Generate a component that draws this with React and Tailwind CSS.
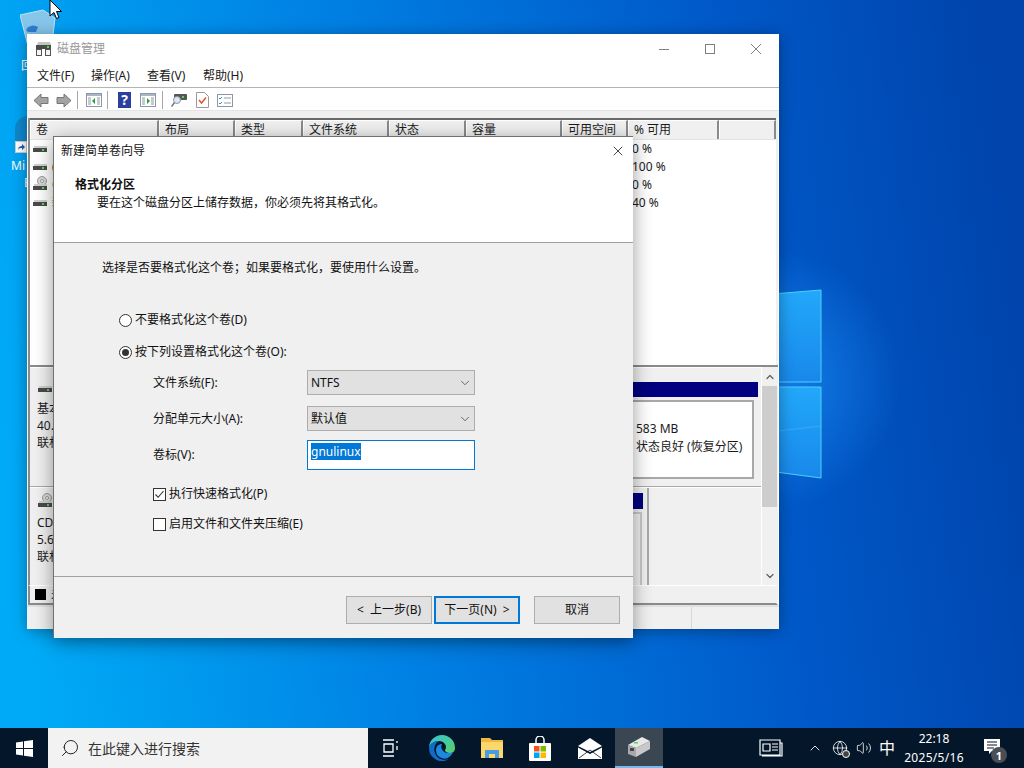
import { ChevronDown, ChevronUp, Globe, Search, Volume2, X } from "lucide-react";

const columns = [
  { label: "卷", w: "w-[129px]" },
  { label: "布局", w: "w-[76px]" },
  { label: "类型", w: "w-[68px]" },
  { label: "文件系统", w: "w-[86px]" },
  { label: "状态", w: "w-[77px]" },
  { label: "容量", w: "w-[96px]" },
  { label: "可用空间", w: "w-[66px]" },
  { label: "% 可用", w: "w-[91px]" },
  { label: "", w: "flex-1" },
];

const rows = [
  { name: "", free: "0 %", cd: false },
  { name: "(", free: "100 %", cd: false },
  { name: "C", free: "0 %", cd: true },
  { name: "新", free: "40 %", cd: false },
];

function DriveIcon({ cd }) {
  return (
    <svg width="18" height="16" viewBox="0 0 18 16" className="block">
      {cd && <circle cx="10" cy="5" r="4.5" fill="#d8d8d8" stroke="#999" />}
      {cd && <circle cx="10" cy="5" r="1.5" fill="#fff" stroke="#999" />}
      <rect x="2" y="8" width="13" height="2" fill="#cfcfcf" />
      <rect x="1" y="10" width="14" height="4" fill="#4a4a4a" />
      <rect x="10" y="11" width="2" height="2" fill="#4fdc4f" />
    </svg>
  );
}

function TitleIcon() {
  return (
    <svg width="16" height="14" viewBox="0 0 16 14" className="block">
      <path d="M3 0H15L16 3H2Z" fill="#c4c4c4" />
      <rect x="1" y="3" width="15" height="4" fill="#4a4a4a" />
      <rect x="12" y="4" width="2" height="2" fill="#4fdc4f" />
      <path d="M1 7H7V14H1ZM10 7H16V14H10Z" fill="#555" />
      <path d="M2 8H6V13H2ZM11 8H15V13H11Z" fill="#f4f4f4" />
    </svg>
  );
}

function NavArrow({ flip }) {
  return (
    <svg width="16" height="15" viewBox="0 0 16 15" className={flip ? "-scale-x-100" : ""}>
      <path d="M1 7.5 8 1v3.5h7v6H8V14Z" fill="#a3a3a3" stroke="#777" />
    </svg>
  );
}

function ToolSep() {
  return <div className="mx-[5px] h-[18px] w-px bg-[#a8a8a8]" />;
}

function PanelIcon({ right }) {
  return (
    <svg width="16" height="14" viewBox="0 0 16 14">
      <rect x="0.5" y="0.5" width="15" height="13" fill="#fff" stroke="#8a98a8" />
      <rect x="1" y="1" width="14" height="2" fill="#aab6c4" />
      <path d="M2 5h3M2 7h3M2 9h3M2 11h3M11 5h3M11 7h3M11 9h3M11 11h3" stroke="#8a98a8" />
      <path d={right ? "M7 5v6l3-3Z" : "M9 5v6L6 8Z"} fill="#2c9c3c" />
    </svg>
  );
}

function HelpIcon() {
  return (
    <div className="flex h-[16px] w-[13px] items-center justify-center bg-[#2b3f9e] text-[14px] font-bold leading-none text-white">
      ?
    </div>
  );
}

function KeyIcon() {
  return (
    <svg width="16" height="16" viewBox="0 0 16 16">
      <rect x="3" y="2" width="13" height="6" rx="1" fill="#555" />
      <rect x="11" y="4" width="2" height="2" fill="#4fdc4f" />
      <circle cx="6" cy="8" r="3.5" fill="#dfe8f0" stroke="#8a98a8" />
      <path d="M3.5 10.5 0.5 14.5" stroke="#777" strokeWidth="1.5" />
    </svg>
  );
}

function CheckDocIcon() {
  return (
    <svg width="13" height="16" viewBox="0 0 13 16">
      <path d="M0.5 0.5h8l4 4v11h-12Z" fill="#fff" stroke="#9a9a9a" />
      <path d="M3 8l2.5 3L10 5.5" fill="none" stroke="#e0562a" strokeWidth="1.5" />
    </svg>
  );
}

function ChecklistIcon() {
  return (
    <svg width="16" height="13" viewBox="0 0 16 13">
      <rect x="0.5" y="0.5" width="15" height="12" fill="#fff" stroke="#8a98a8" />
      <path d="M2 4l1 1 2-2M2 9l1 1 2-2" fill="none" stroke="#3a86d0" />
      <path d="M7 4h7M7 9h7" stroke="#8a98a8" />
    </svg>
  );
}

function ComboBox({ value }) {
  return (
    <div className="flex h-[25px] w-[168px] items-center justify-between border border-[#adadad] bg-[#e1e1e1] pl-[3px] pr-[2px]">
      <span>{value}</span>
      <ChevronDown size={14} strokeWidth={1.2} className="text-[#333]" />
    </div>
  );
}

function Radio({ on }) {
  return (
    <div className="flex h-[13px] w-[13px] items-center justify-center rounded-full border border-[#333] bg-white">
      {on && <div className="h-[7px] w-[7px] rounded-full bg-[#333]" />}
    </div>
  );
}

function Check({ on }) {
  return (
    <div className="flex h-[13px] w-[13px] items-center justify-center border border-[#333] bg-white">
      {on && (
        <svg width="11" height="11" viewBox="0 0 11 11">
          <path d="M1.5 5.500 4.200 8.300 9.500 2" fill="none" stroke="#333" strokeWidth="1.1" />
        </svg>
      )}
    </div>
  );
}

function WizardButton({ children, active }) {
  return (
    <div
      className={
        active
          ? "flex h-[28px] w-[86px] items-center justify-center whitespace-pre border-2 border-[#0078d7] bg-[#e1e1e1]"
          : "flex h-[28px] w-[86px] items-center justify-center whitespace-pre border border-[#adadad] bg-[#e1e1e1]"
      }
    >
      {children}
    </div>
  );
}

function Wallpaper() {
  return (
    <svg className="absolute inset-0" width="1024" height="768" viewBox="0 0 1024 768">
      <defs>
        <linearGradient id="base" x1="0" y1="0.55" x2="1" y2="0.45">
          <stop offset="0" stopColor="#00aaf6" />
          <stop offset="0.35" stopColor="#0082e4" />
          <stop offset="0.75" stopColor="#0058c8" />
          <stop offset="1" stopColor="#0044ac" />
        </linearGradient>
        <radialGradient id="glow" cx="770" cy="380" r="130" gradientUnits="userSpaceOnUse">
          <stop offset="0" stopColor="#1a8cf5" stopOpacity="0.8" />
          <stop offset="1" stopColor="#1a8cf5" stopOpacity="0" />
        </radialGradient>
        <linearGradient id="pane" x1="0" y1="0" x2="0" y2="1">
          <stop offset="0" stopColor="#22a8fa" />
          <stop offset="1" stopColor="#1888ea" />
        </linearGradient>
      </defs>
      <rect width="1024" height="768" fill="url(#base)" />
      <rect width="1024" height="768" fill="url(#glow)" />
      <path d="M700 300 821 290V382H700Z" fill="url(#pane)" stroke="#4fd0f8" />
      <path d="M700 387H821V478L700 462Z" fill="url(#pane)" stroke="#4fd0f8" />
      <path d="M700 440 821 426" stroke="#5cc0f8" strokeOpacity="0.4" />
    </svg>
  );
}

function DesktopIcons() {
  return (
    <>
      <div className="absolute left-[20px] top-[8px]">
        <svg width="38" height="42" viewBox="0 0 38 42">
          <path d="M0 7 23 2 35 10 32 36 8 38Z" fill="#86c6ea" stroke="#bfe2f4" />
          <path d="M6 22a8 8 0 0 1 12-3l-2 5H8Z" fill="#2f80d0" />
        </svg>
      </div>
      <span className="absolute left-[21px] top-[57px] text-[12px] leading-[18px] text-white">回</span>
      <div className="absolute left-[15px] top-[116px] h-[36px] w-[13px] rounded-l-full bg-[#0f86cc]" />
      <div className="absolute left-[15px] top-[141px] flex h-[12px] w-[12px] items-center justify-center border border-[#ccc] bg-white">
        <svg width="8" height="8" viewBox="0 0 8 8">
          <path d="M1 7C1 4 3 3 5 3V1L8 4 5 7V5C3 5 2 5 1 7Z" fill="#1a5fb4" />
        </svg>
      </div>
      <span className="absolute left-[11px] top-[157px] text-[12px] leading-[18px] text-white">Mi</span>
      <span className="absolute left-[24px] top-[174px] text-[12px] leading-[18px] text-white">E</span>
      <svg className="absolute left-[49px] top-0" width="13" height="20" viewBox="0 0 13 20">
        <path d="M1 0V16L5 12.500 7.500 18.500 10 17.500 7.500 11.500H12.500Z" fill="#fff" stroke="#000" />
      </svg>
    </>
  );
}

function DiskManagementWindow() {
  return (
    <div className="absolute left-[27px] top-[34px] flex h-[595px] w-[752px] flex-col bg-white shadow-[0_2px_14px_rgba(0,0,0,0.35)]">
      {/* Title bar */}
      <div className="flex h-[30px] shrink-0 items-center">
        <div className="ml-[8px] mr-[6px]">
          <TitleIcon />
        </div>
        <span className="text-[#999]">磁盘管理</span>
        <div className="ml-auto flex items-center">
          <div className="flex w-[46px] justify-center">
            <div className="h-px w-[10px] bg-[#808080]" />
          </div>
          <div className="flex w-[46px] justify-center">
            <div className="h-[10px] w-[10px] border border-[#808080]" />
          </div>
          <div className="flex w-[46px] justify-center">
            <svg width="10" height="10" viewBox="0 0 10 10">
              <path d="M0 0 10 10M10 0 0 10" stroke="#808080" />
            </svg>
          </div>
        </div>
      </div>

      {/* Menu */}
      <div className="flex h-[24px] shrink-0 items-center border-b border-[#b4b4b4] pl-[10px]">
        <span className="w-[54px]">文件(F)</span>
        <span className="w-[56px]">操作(A)</span>
        <span className="w-[56px]">查看(V)</span>
        <span>帮助(H)</span>
      </div>

      {/* Toolbar */}
      <div className="flex h-[22px] shrink-0 items-center pl-[6px] pt-[2px]">
        <NavArrow />
        <div className="w-[7px]" />
        <NavArrow flip />
        <ToolSep />
        <div className="ml-[3px]">
          <PanelIcon />
        </div>
        <ToolSep />
        <div className="ml-[5px] mr-[9px]">
          <HelpIcon />
        </div>
        <PanelIcon right />
        <div className="w-px" />
        <ToolSep />
        <div className="ml-[3px] mr-[9px]">
          <KeyIcon />
        </div>
        <div className="mr-[8px]">
          <CheckDocIcon />
        </div>
        <ChecklistIcon />
      </div>
      <div className="h-[8px] shrink-0 border-t border-[#e4e4e4] bg-[#f0f0f0]" />

      {/* Volume list */}
      <div className="mx-[1px] flex h-[247px] shrink-0 flex-col border-x-2 border-[#8a8a8a] border-r-[#f0f0f0]">
        <div className="flex h-[21px] shrink-0 border-t-2 border-[#6a6a6a] bg-[#f0f0f0]">
          {columns.map((col) => (
            <div
              key={col.label}
              className={`${col.w} flex items-center border-l border-t border-l-white border-t-white border-r-2 border-r-[#8a8a8a] pb-[1px] pl-[5px]`}
            >
              {col.label}
            </div>
          ))}
        </div>
        <div className="flex-1 border-t border-[#e4e4e4]">
          {rows.map((row) => (
            <div key={row.free} className="flex h-[18px] items-center">
              <div className="flex w-[602px] items-center pl-[2px]">
                <div className={row.cd ? "-translate-y-[1px]" : "-translate-y-[3px]"}>
                  <DriveIcon cd={row.cd} />
                </div>
                <span className="ml-[2px]">{row.name}</span>
              </div>
              <span>{row.free}</span>
            </div>
          ))}
        </div>
      </div>

      {/* Disk map */}
      <div className="mx-[1px] flex h-[220px] shrink-0 border-l-2 border-t-2 border-[#8a8a8a] bg-[#f0f0f0]">
        <div className="flex min-w-0 flex-1 flex-col">
          <div className="flex h-[120px] shrink-0 border-b border-[#a8a8a8] border-t border-t-white">
            <div className="w-[100px] shrink-0 pl-[7px] pt-[10px]">
              <DriveIcon />
              <div className="mt-[6px] leading-[17px]">
                <div>基本</div>
                <div>40.00 GB</div>
                <div>联机</div>
              </div>
            </div>
            <div className="ml-auto mr-[3px] mt-[14px] w-[130px] shrink-0">
              <div className="h-[15px] bg-[#000080]" />
              <div className="mr-[4px] mt-[3px] h-[79px] border-2 border-[#a8a8a8] bg-white pl-[6px] pt-[18px] leading-[18px]">
                <div>583 MB</div>
                <div className="whitespace-nowrap">状态良好 (恢复分区)</div>
              </div>
            </div>
          </div>
          <div className="flex flex-1 border-t border-t-white">
            <div className="w-[100px] shrink-0 pl-[7px] pt-[5px]">
              <DriveIcon cd />
              <div className="mt-[5px] leading-[17px]">
                <div>CD-ROM</div>
                <div>5.66 GB</div>
                <div>联机</div>
              </div>
            </div>
            <div className="ml-[490px] mr-[4px] mt-[5px] flex w-[23px] shrink-0 flex-col">
              <div className="h-[16px] shrink-0 bg-[#000080]" />
              <div className="mr-[1px] mt-[3px] flex-1 border-r-2 border-t-2 border-[#c8c8c8]" />
            </div>
            <div className="w-[2px] shrink-0 bg-[#a8a8a8]" />
          </div>
        </div>
        {/* Scrollbar */}
        <div className="mr-[1px] flex w-[16px] shrink-0 flex-col items-center border-l border-white">
          <div className="flex h-[19px] items-center">
            <ChevronUp size={12} strokeWidth={2.5} className="text-[#606060]" />
          </div>
          <div className="h-[121px] w-full bg-[#cdcdcd]" />
          <div className="mt-auto flex h-[19px] items-center">
            <ChevronDown size={12} strokeWidth={2.5} className="text-[#606060]" />
          </div>
        </div>
      </div>

      {/* Legend */}
      <div className="mx-[1px] flex h-[20px] shrink-0 items-center border-x-2 border-b-2 border-t border-[#8a8a8a] border-t-white border-r-[#f0f0f0] bg-[#f0f0f0] pl-[5px]">
        <div className="h-[11px] w-[11px] bg-black" />
        <span className="ml-[5px]">未分配</span>
      </div>

      {/* Status bar */}
      <div className="flex flex-1 border-t-2 border-[#e0e0e0] bg-[#f0f0f0]">
        <div className="w-[665px] border-r border-[#d8d8d8]" />
      </div>
    </div>
  );
}

function WizardDialog() {
  return (
    <div className="absolute left-[53px] top-[136px] flex h-[502px] w-[580px] flex-col border-l border-t border-[#707070] bg-[#f0f0f0] text-[#111] shadow-[0_4px_18px_rgba(0,0,0,0.4)]">
      <div className="h-[106px] shrink-0 border-b border-[#a0a0a0] bg-white">
        <div className="flex h-[28px] items-center justify-between pl-[7px] pr-[7px]">
          <span>新建简单卷向导</span>
          <X size={16} strokeWidth={1.1} className="text-black" />
        </div>
        <div className="ml-[21px] mt-[11px] font-bold leading-[18px]">格式化分区</div>
        <div className="ml-[43px] leading-[18px]">要在这个磁盘分区上储存数据，你必须先将其格式化。</div>
      </div>

      <div className="flex-1 pl-[48px] pt-[16px]">
        <div className="leading-[18px]">选择是否要格式化这个卷；如果要格式化，要使用什么设置。</div>

        <div className="ml-[17px] mt-[34px] flex h-[18px] items-center gap-[3px]">
          <Radio />
          <span>不要格式化这个卷(D)</span>
        </div>
        <div className="ml-[17px] mt-[14px] flex h-[18px] items-center gap-[3px]">
          <Radio on />
          <span>按下列设置格式化这个卷(O):</span>
        </div>

        <div className="ml-[51px] mt-[9px] flex h-[25px] items-center">
          <span className="w-[154px]">文件系统(F):</span>
          <ComboBox value="NTFS" />
        </div>
        <div className="ml-[51px] mt-[11px] flex h-[25px] items-center">
          <span className="w-[154px]">分配单元大小(A):</span>
          <ComboBox value="默认值" />
        </div>
        <div className="ml-[51px] mt-[9px] flex h-[30px] items-center">
          <span className="w-[154px]">卷标(V):</span>
          <div className="flex h-[30px] w-[168px] border border-[#0078d7] bg-white pl-[3px] pt-[2px]">
            <span className="h-[17px] bg-[#0078d7] leading-[17px] text-white">gnulinux</span>
          </div>
        </div>

        <div className="ml-[51px] mt-[15px] flex h-[18px] items-center gap-[3px]">
          <Check on />
          <span>执行快速格式化(P)</span>
        </div>
        <div className="ml-[51px] mt-[12px] flex h-[18px] items-center gap-[3px]">
          <Check />
          <span>启用文件和文件夹压缩(E)</span>
        </div>
      </div>

      <div className="flex h-[62px] shrink-0 items-start border-t border-[#a0a0a0] pl-[292px] pt-[19px]">
        <WizardButton>{"<  上一步(B)"}</WizardButton>
        <div className="w-[2px]" />
        <WizardButton active>{"下一页(N)  >"}</WizardButton>
        <div className="w-[14px]" />
        <WizardButton>取消</WizardButton>
      </div>
    </div>
  );
}

function Taskbar() {
  return (
    <div className="relative flex h-[40px] shrink-0 items-center bg-[#04172a] text-white">
      <div className="flex w-[48px] justify-center">
        <svg width="17" height="17" viewBox="0 0 17 17" fill="#fff">
          <path d="M0 2.400 7 1.400V8H0ZM8 1.200 17 0V8H8ZM0 9H7V15.600L0 14.600ZM8 9H17V17L8 15.800Z" />
        </svg>
      </div>
      <div className="flex h-[40px] w-[320px] items-center bg-[#f2f2f2] pl-[12px] text-[14px] text-[#333]">
        <Search size={20} strokeWidth={1.2} className="-scale-x-100 text-[#222]" />
        <span className="ml-[8px]">在此键入进行搜索</span>
      </div>
      <div className="flex w-[47px] justify-center pr-[2px]">
        <svg width="16" height="18" viewBox="0 0 16 18" fill="none" stroke="#fff" strokeWidth="1.3">
          <path d="M0 1h11M0 17h11M1 5h9v8H1ZM14 2v2M14 7v4" />
        </svg>
      </div>
      <div className="flex w-[53px] justify-center">
        <svg width="26" height="26" viewBox="0 0 26 26">
          <defs>
            <linearGradient id="edgeA" x1="0" y1="0" x2="1" y2="1">
              <stop offset="0" stopColor="#36c3d8" />
              <stop offset="1" stopColor="#58d068" />
            </linearGradient>
          </defs>
          <path d="M13 0a13 13 0 0 1 13 13c0 3-2 5-5 5-3 0-5-1-5-3 0-1 1-1 1-3 0-3-3-6-7-6-5 0-9 3-10 7A13 13 0 0 1 13 0Z" fill="url(#edgeA)" />
          <path d="M0 13c1-5 5-7 10-7-5 3-6 9-3 14 2 4 8 6 13 4a13 13 0 0 1-20-11Z" fill="#0f6cc8" />
          <path d="M7 15c0-4 3-6 6-6-2 3 0 8 5 9 2 0 4 0 6-1-2 5-7 8-11 6-4-1-6-4-6-8Z" fill="#1a8ae0" />
        </svg>
      </div>
      <div className="flex w-[47px] justify-center">
        <svg width="22" height="22" viewBox="0 0 22 22">
          <path d="M0 1H9L11 3H22V21H0Z" fill="#f0b840" />
          <rect y="5" width="22" height="16" fill="#fcd86c" />
          <path d="M4 21V13H18V21H14V17H8V21Z" fill="#4a9ce0" />
        </svg>
      </div>
      <div className="flex w-[50px] justify-center">
        <svg width="22" height="25" viewBox="0 0 22 25">
          <path d="M7 7V4a4 4 0 0 1 8 0v3" fill="none" stroke="#fff" strokeWidth="1.5" />
          <rect y="7" width="22" height="18" rx="1" fill="#fff" />
          <rect x="5" y="10" width="5.500" height="5.500" fill="#f25022" />
          <rect x="11.500" y="10" width="5.500" height="5.500" fill="#7fba00" />
          <rect x="5" y="16.500" width="5.500" height="5.500" fill="#00a4ef" />
          <rect x="11.500" y="16.500" width="5.500" height="5.500" fill="#ffb900" />
        </svg>
      </div>
      <div className="flex w-[50px] justify-center">
        <svg width="24" height="21" viewBox="0 0 24 21">
          <path d="M12 0 24 8 12 14 0 8Z" fill="#fff" />
          <path d="M0 9.500 12 16 24 9.500V21H0Z" fill="#fff" />
          <path d="M1 20 12 12 23 20" fill="none" stroke="#04172a" strokeWidth="0.8" />
        </svg>
      </div>
      <div className="flex h-[40px] w-[48px] items-center justify-center border-b-2 border-[#76b9ed] bg-[#3a4652]">
        <svg width="24" height="22" viewBox="0 0 24 22">
          <path d="M1 9 15 1 23 5 9 12Z" fill="#e8e8e8" />
          <path d="M1 9 9 12V21L1 18Z" fill="#a8a8a8" />
          <path d="M9 12 23 5V13L9 21Z" fill="#c8c8c8" />
          <rect x="3" y="12" width="4" height="3" fill="#444" />
          <rect x="7" y="6" width="4" height="1.500" fill="#4fdc4f" />
        </svg>
      </div>

      <div className="ml-auto flex items-center">
        <svg width="24" height="18" viewBox="0 0 24 18" fill="none" stroke="#fff" strokeWidth="1.2" className="mr-[24px]">
          <path d="M1 1H21V16H1ZM21 4H23V17H3M4 5H11V12H4ZM13 5H19M13 8H19M13 11H19" />
        </svg>
        <ChevronUp size={16} strokeWidth={1.3} className="mr-[9px]" />
        <div className="relative mr-[8px]">
          <Globe size={16} strokeWidth={1.2} />
          <div className="absolute -bottom-[2px] -right-[2px] h-[8px] w-[8px] rounded-full border border-white bg-[#444]" />
        </div>
        <Volume2 size={16} strokeWidth={1.2} className="mr-[7px]" />
        <span className="mr-[7px] text-[16px] leading-none">中</span>
        <div className="mr-[18px] w-[64px] text-center leading-[19px]">
          <div>22:18</div>
          <div className="tracking-[0.3px]">2025/5/16</div>
        </div>
        <div className="relative mr-[24px] h-[18px] w-[16px]">
          <svg width="16" height="16" viewBox="0 0 16 16">
            <path d="M0 0H16V12H8L5 15V12H0Z" fill="#fff" />
            <path d="M3 3H13M3 6H13M3 9H10" stroke="#04172a" />
          </svg>
          <div className="absolute -bottom-[6px] -right-[7px] flex h-[16px] w-[16px] items-center justify-center rounded-full bg-[#4a4f55] text-[11px] font-bold leading-none">
            1
          </div>
        </div>
      </div>
    </div>
  );
}

export default function App() {
  return (
    <div className="relative flex h-[768px] w-[1024px] flex-col overflow-hidden font-['Noto_Sans','Noto_Sans_CJK_SC',sans-serif] text-[12px] text-[#1a1a1a]">
      <div className="relative flex-1">
        <Wallpaper />
        <DesktopIcons />
        <DiskManagementWindow />
        <WizardDialog />
      </div>
      <Taskbar />
    </div>
  );
}
